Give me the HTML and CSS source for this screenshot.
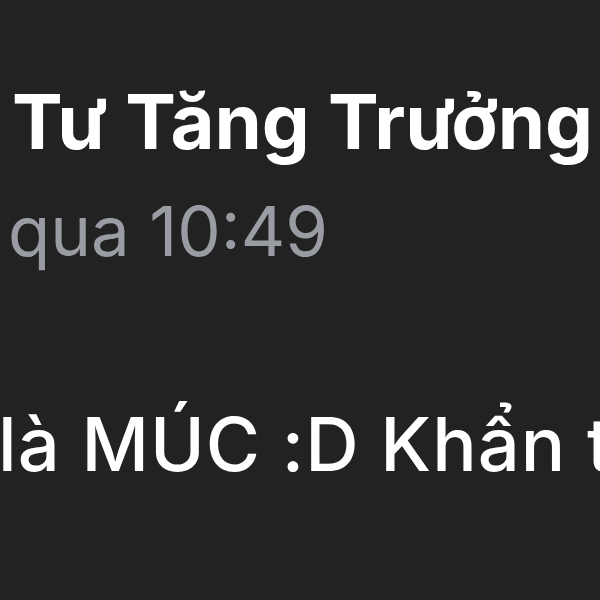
FILE: index.html
```html
<!DOCTYPE html>
<html lang="vi">
<head>
<meta charset="utf-8">
<link rel="stylesheet" href="styles.css">
</head>
<body>
<div class="view">
  <div class="header">
    <div class="name">Tư Tăng Trưởng</div>
    <div class="time">qua 10:49</div>
  </div>
  <div class="message">là MÚC :D Khẩn trương</div>
</div>
</body>
</html>
```
FILE: styles.css
```css
html, body {
  margin: 0;
  padding: 0;
  background: #222222;
  width: 600px;
  height: 600px;
  overflow: hidden;
}
.view {
  font-family: Inter, "Noto Sans", sans-serif;
  white-space: nowrap;
  overflow: hidden;
  width: 600px;
  height: 600px;
}
.header {
  padding: 76px 0 0 12px;
}
.name {
  color: #ffffff;
  font-weight: 700;
  font-size: 76px;
  line-height: 90px;
  letter-spacing: 0;
}
.time {
  color: #9a9ca3;
  font-size: 69px;
  line-height: 80px;
  margin-left: -4px;
  margin-top: 25px;
}
.message {
  color: #ffffff;
  font-size: 74px;
  font-weight: 500;
  line-height: 90px;
  letter-spacing: 1px;
  margin-top: 128px;
  margin-left: -2px;
}
```
